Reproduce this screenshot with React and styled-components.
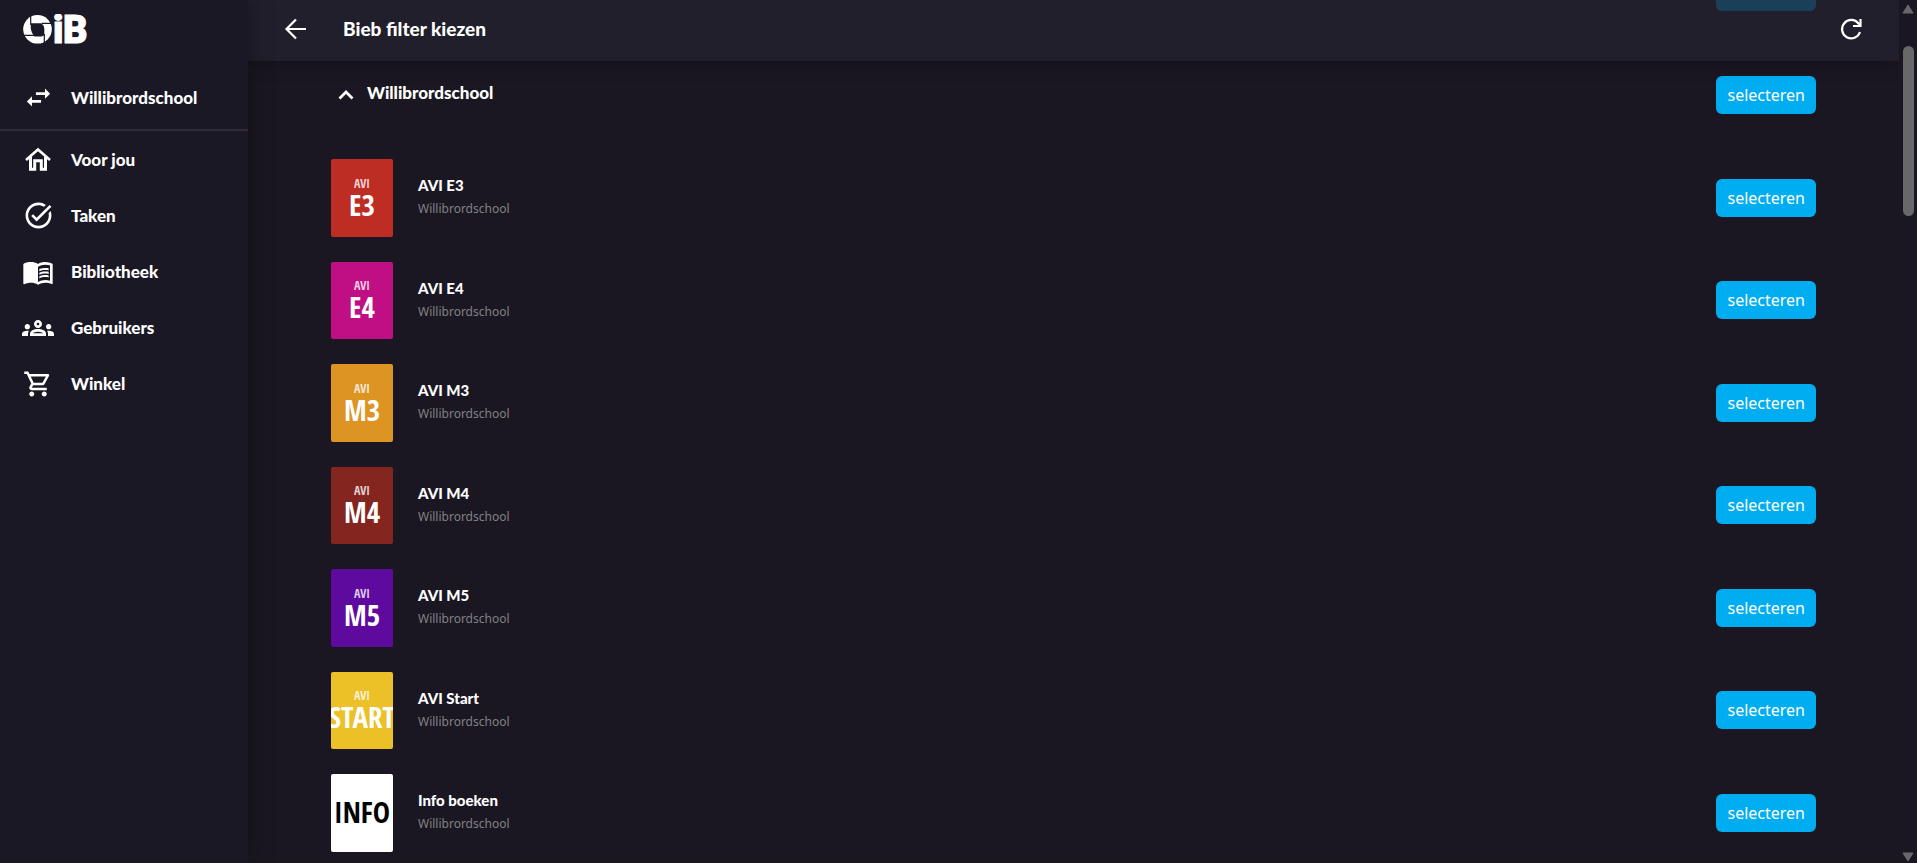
import React from 'react';
import styled, { createGlobalStyle } from 'styled-components';
import {
  MdSwapHoriz,
  MdTaskAlt,
  MdMenuBook,
  MdOutlineGroups,
  MdOutlineShoppingCart,
} from 'react-icons/md';

const GlobalStyle = createGlobalStyle`
  * {
    box-sizing: border-box;
  }

  body {
    margin: 0;
    background: #1b1722;
    color: #ffffff;
    font-family: 'Noto Sans', 'Open Sans', sans-serif;
    font-size: 16px;
  }

  button {
    border: 0;
    padding: 0;
    background: none;
    color: inherit;
    font: inherit;
    cursor: pointer;
  }
`;

const Layout = styled.div`
  display: flex;
  height: 100vh;
  overflow: hidden;
`;

const Sidebar = styled.aside`
  position: relative;
  z-index: 3;
  flex: 0 0 248px;
  background: #1b1825;
  box-shadow: 0 0 24px rgba(0, 0, 0, 0.35);
`;

const Brand = styled.a`
  display: block;
  height: 60px;
  padding: 14px 22px;
  color: #ffffff;
`;

const School = styled.button`
  display: flex;
  align-items: center;
  width: 100%;
  height: 71px;
  padding: 6px 22px 0;
  border-bottom: 2px solid #2f2b39;
`;

const NavLink = styled.a`
  display: flex;
  align-items: center;
  height: 56px;
  padding: 1px 22px 0;
  color: #ffffff;
  text-decoration: none;
`;

const NavIcon = styled.span`
  display: flex;
  justify-content: center;
  flex: 0 0 32px;
  margin-right: 17px;
`;

const NavLabel = styled.span`
  font-family: Lato, sans-serif;
  font-size: 17px;
  font-weight: 900;
`;

const Content = styled.div`
  position: relative;
  flex: 1;
  min-width: 0;
  overflow: hidden;
`;

// floats over the list, which stays visible through it
const TopBar = styled.header`
  position: absolute;
  z-index: 2;
  top: 0;
  left: 0;
  right: 0;
  display: flex;
  align-items: center;
  height: 61px;
  padding: 0 36px;
  background: rgba(33, 33, 46, 0.78);
  box-shadow: 0 0 20px rgba(0, 0, 0, 0.4);
`;

const IconButton = styled.button`
  display: flex;
  margin-bottom: 3px;
`;

const PageTitle = styled.h1`
  flex: 1;
  margin: 0 0 5px 35px;
  font-family: Lato, sans-serif;
  font-size: 19px;
  font-weight: 900;
`;

// starts above the top edge, as the list is scrolled a little
const List = styled.ul`
  margin: -60px 0 0;
  padding: 0 83px;
  list-style: none;
`;

const Row = styled.li`
  display: flex;
  align-items: center;
  padding: 13px 0 12px;
`;

const GroupRow = styled.li`
  display: flex;
  align-items: center;
  justify-content: flex-end;
  height: 103px;
`;

const GroupToggle = styled.button`
  display: flex;
  align-items: center;
  gap: 6px;
  margin: 0 auto 4px 0;
  font-family: Lato, sans-serif;
  font-size: 17px;
  font-weight: 900;
`;

const Cover = styled.div`
  display: flex;
  flex-direction: column;
  align-items: center;
  justify-content: center;
  flex: 0 0 62px;
  aspect-ratio: 4 / 5;
  padding-bottom: 2px;
  border-radius: 2px;
  overflow: hidden;
  background: ${(props) => props.$color};
  color: ${(props) => (props.$dark ? '#000000' : '#ffffff')};
`;

const CoverSmall = styled.span`
  font-family: 'Open Sans Condensed', 'Open Sans', sans-serif;
  font-size: 12px;
  font-weight: 300;
  line-height: 16px;
  opacity: 0.8;
`;

const CoverBig = styled.span`
  font-family: 'Open Sans Condensed', 'Open Sans', sans-serif;
  font-size: 29px;
  font-weight: 800;
  line-height: 26px;
`;

const Info = styled.div`
  flex: 1;
  margin: 0 0 2px 25px;
`;

const Name = styled.h2`
  margin: 0 0 5px;
  font-family: Lato, sans-serif;
  font-size: 15px;
  font-weight: 900;
  line-height: 20px;
`;

const Owner = styled.p`
  margin: 0;
  color: #818184;
  font-size: 12px;
  line-height: 18px;
`;

const SelectButton = styled.button`
  padding: 8px 11px;
  border-radius: 6px;
  background: #00adf0;
  font-size: 16px;
  line-height: 22px;
`;

const ScrollRail = styled.div`
  display: flex;
  flex-direction: column;
  align-items: center;
  flex: 0 0 18px;
  padding: 4px 0 1px;
`;

const ScrollThumb = styled.div`
  width: 11px;
  height: 170px;
  margin: 32px 0 auto;
  border-radius: 6px;
  background: #68686a;
`;

function HomeIcon({ size }) {
  return (
    <svg width={size} height={size} viewBox="0 0 30 30" fill="none" stroke="currentColor">
      <path d="M3 15L15 4.5L27 15" strokeWidth="2.6" />
      <path d="M7.5 12V24.3H11.7V15.8H18.3V24.3H22.5V12" strokeWidth="3" />
    </svg>
  );
}

const navItems = [
  { label: 'Voor jou', icon: HomeIcon, size: 30 },
  { label: 'Taken', icon: MdTaskAlt, size: 31 },
  { label: 'Bibliotheek', icon: MdMenuBook, size: 32 },
  { label: 'Gebruikers', icon: MdOutlineGroups, size: 32 },
  { label: 'Winkel', icon: MdOutlineShoppingCart, size: 30 },
];

const collections = [
  { name: 'AVI E3', small: 'AVI', big: 'E3', color: '#bd2d24' },
  { name: 'AVI E4', small: 'AVI', big: 'E4', color: '#c00f85' },
  { name: 'AVI M3', small: 'AVI', big: 'M3', color: '#dd9423' },
  { name: 'AVI M4', small: 'AVI', big: 'M4', color: '#84251f' },
  { name: 'AVI M5', small: 'AVI', big: 'M5', color: '#5f0a9f' },
  { name: 'AVI Start', small: 'AVI', big: 'START', color: '#ecc127' },
  { name: 'Info boeken', big: 'INFO', color: '#ffffff', dark: true },
];

function Logo() {
  return (
    <svg width="70" height="34" viewBox="0 0 70 34" role="img" aria-label="OiB">
      <circle cx="15.5" cy="15.3" r="14.3" fill="#fff" />
      <path
        d="M9 9.3H19.5Q22.3 12 22.3 14.5V21.3L19.5 22.5H12.5Q8.7 18 8.7 13Z"
        fill="#1b1825"
      />
      <path
        d="M8.7 1.5V11M20 9.3H30M22.3 20V29M1 21.3H12"
        fill="none"
        stroke="#1b1825"
        strokeWidth="1.2"
      />
      <g fill="#fff" stroke="#fff" fontFamily="Roboto" fontWeight="900" fontSize="38">
        <text x="31" y="29">
          i
        </text>
        <text x="41" y="29">
          B
        </text>
      </g>
    </svg>
  );
}

function BackIcon() {
  return (
    <svg width="24" height="24" viewBox="0 0 24 24" fill="none" stroke="#fff">
      <path d="M22 12H2.5M12 2.5L2.5 12L12 21.5" strokeWidth="2.2" />
    </svg>
  );
}

function RefreshIcon() {
  return (
    <svg width="24" height="24" viewBox="0 0 24 24" fill="none" stroke="#fff">
      <path d="M21 15A9.2 9.2 0 1 1 19.5 6.5L21 8.5" strokeWidth="2.2" />
      <path d="M21.5 2V9H14" strokeWidth="2.2" />
    </svg>
  );
}

function ChevronUpIcon() {
  return (
    <svg width="30" height="24" viewBox="0 0 30 24" fill="none" stroke="#fff">
      <path d="M8.5 17.5L15 11L21.5 17.5" strokeWidth="2.8" />
    </svg>
  );
}

export default function App() {
  return (
    <Layout>
      <GlobalStyle />
      <Sidebar>
        <Brand href="#">
          <Logo />
        </Brand>
        <School type="button">
          <NavIcon>
            <MdSwapHoriz size={31} />
          </NavIcon>
          <NavLabel>Willibrordschool</NavLabel>
        </School>
        <nav>
          {navItems.map(({ label, icon: Icon, size }) => (
            <NavLink href="#" key={label}>
              <NavIcon>
                <Icon size={size} />
              </NavIcon>
              <NavLabel>{label}</NavLabel>
            </NavLink>
          ))}
        </nav>
      </Sidebar>
      <Content>
        <TopBar>
          <IconButton type="button" aria-label="Terug">
            <BackIcon />
          </IconButton>
          <PageTitle>Bieb filter kiezen</PageTitle>
          <IconButton type="button" aria-label="Vernieuwen">
            <RefreshIcon />
          </IconButton>
        </TopBar>
        <List>
          <GroupRow>
            <SelectButton type="button">selecteren</SelectButton>
          </GroupRow>
          <GroupRow>
            <GroupToggle type="button" aria-expanded="true">
              <ChevronUpIcon />
              Willibrordschool
            </GroupToggle>
            <SelectButton type="button">selecteren</SelectButton>
          </GroupRow>
          {collections.map((item) => (
            <Row key={item.name}>
              <Cover $color={item.color} $dark={item.dark}>
                {item.small && <CoverSmall>{item.small}</CoverSmall>}
                <CoverBig>{item.big}</CoverBig>
              </Cover>
              <Info>
                <Name>{item.name}</Name>
                <Owner>Willibrordschool</Owner>
              </Info>
              <SelectButton type="button">selecteren</SelectButton>
            </Row>
          ))}
        </List>
      </Content>
      <ScrollRail aria-hidden="true">
        <svg width="12" height="10" viewBox="0 0 12 10">
          <path d="M6 1 L11 9 H1 Z" fill="#68686a" stroke="#68686a" strokeLinejoin="round" />
        </svg>
        <ScrollThumb />
        <svg width="12" height="10" viewBox="0 0 12 10">
          <path d="M6 9 L11 1 H1 Z" fill="#68686a" stroke="#68686a" strokeLinejoin="round" />
        </svg>
      </ScrollRail>
    </Layout>
  );
}
